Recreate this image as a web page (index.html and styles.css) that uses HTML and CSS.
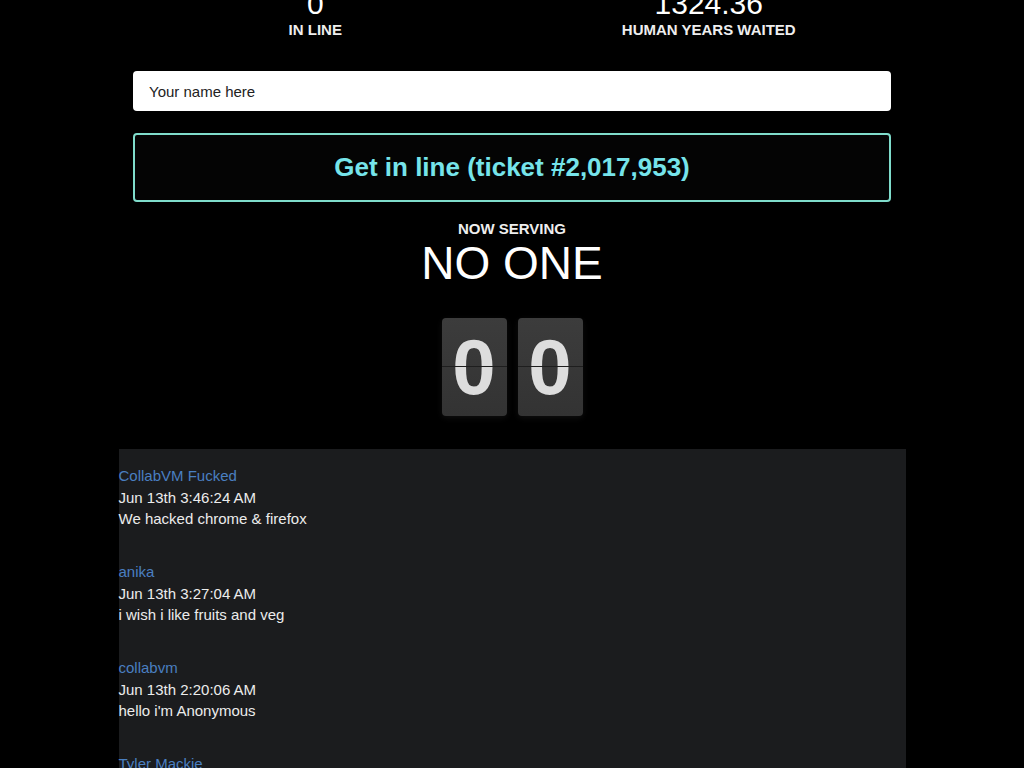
FILE: index.html
```html
<!DOCTYPE html>
<html lang="en">
<head>
    <meta charset="UTF-8">
    <meta name="viewport" content="width=device-width, initial-scale=1.0">
    <title>The Line</title>
    <link rel="stylesheet" href="styles.css">
</head>
<body>
    <div class="stats">
        <div class="stat">
            <div class="stat-value">0</div>
            <div class="stat-label">IN LINE</div>
        </div>
        <div class="stat">
            <div class="stat-value">1324.36</div>
            <div class="stat-label">HUMAN YEARS WAITED</div>
        </div>
    </div>

    <div class="join">
        <input type="text" id="name" class="name-input" value="Your name here">
        <button class="join-btn">Get in line (ticket #2,017,953)</button>
    </div>

    <div class="serving">
        <div class="serving-label">NOW SERVING</div>
        <div class="serving-name">NO ONE</div>
    </div>

    <div class="flip">
        <div class="flip-card">0</div>
        <div class="flip-card">0</div>
    </div>

    <div id="chat">
        <div class="msg">
            <div class="msg-name">CollabVM Fucked</div>
            <div class="msg-date">Jun 13th 3:46:24 AM</div>
            <div class="msg-text">We hacked chrome &amp; firefox</div>
        </div>
        <div class="msg">
            <div class="msg-name">anika</div>
            <div class="msg-date">Jun 13th 3:27:04 AM</div>
            <div class="msg-text">i wish i like fruits and veg</div>
        </div>
        <div class="msg">
            <div class="msg-name">collabvm</div>
            <div class="msg-date">Jun 13th 2:20:06 AM</div>
            <div class="msg-text">hello i'm Anonymous</div>
        </div>
        <div class="msg">
            <div class="msg-name">Tyler Mackie</div>
            <div class="msg-date">Jun 13th 1:58:41 AM</div>
            <div class="msg-text">hi</div>
        </div>
    </div>
</body>
</html>
```

FILE: styles.css
```css
/* Global */
body {
    margin: 0;
    padding: 0;
    background-color: #000;
    color: #eee;
    font-family: "Liberation Sans", Arial, sans-serif;
    display: flex;
    flex-direction: column;
    align-items: center;
    overflow: hidden;
}

/* Stats (page is scrolled a little) */
.stats {
    display: flex;
    width: 787px;
    margin-top: -13px;
}

.stat {
    flex: 1;
    text-align: center;
}

.stat-value {
    font-size: 30px;
    line-height: 34px;
    color: #fff;
}

.stat-label {
    font-size: 15px;
    font-weight: bold;
    line-height: 18px;
    color: #eee;
}

/* Join form */
.join {
    width: 758px;
    margin-top: 32px;
    display: flex;
    flex-direction: column;
    gap: 22px;
}

.name-input {
    box-sizing: border-box;
    height: 40px;
    padding: 0 16px;
    border: none;
    border-radius: 4px;
    background-color: #fff;
    color: #222;
    font-family: inherit;
    font-size: 15px;
}

.join-btn {
    box-sizing: border-box;
    height: 69px;
    background-color: #040404;
    border: 2px solid #7fdccb;
    border-radius: 4px;
    color: #76e4ea;
    font-family: inherit;
    font-size: 26px;
    font-weight: bold;
    cursor: pointer;
}

/* Now serving */
.serving {
    margin-top: 18px;
    text-align: center;
}

.serving-label {
    font-size: 15px;
    font-weight: bold;
    line-height: 18px;
}

.serving-name {
    font-size: 46px;
    line-height: 51px;
    color: #fff;
}

/* Flip counter */
.flip {
    display: flex;
    gap: 11px;
    margin-top: 29px;
}

.flip-card {
    position: relative;
    width: 65px;
    height: 98px;
    border-radius: 4px;
    background: linear-gradient(#3c3c3c, #333);
    box-shadow: 0 2px 6px rgba(255, 255, 255, 0.06);
    color: #ddd;
    font-size: 78px;
    font-weight: bold;
    line-height: 98px;
    text-align: center;
}

.flip-card::after {
    content: "";
    position: absolute;
    left: 0;
    right: 0;
    top: 48px;
    height: 1px;
    background-color: #1e1e1e;
}

/* Chat */
#chat {
    width: 787px;
    margin-top: 33px;
    padding-top: 16px;
    background-color: #1b1c1e;
    min-height: 400px;
}

.msg {
    font-size: 15px;
    line-height: 21.5px;
    margin-bottom: 31.5px;
}

.msg-name {
    color: #4a7fc1;
}

.msg-date,
.msg-text {
    color: #ececec;
}
```
